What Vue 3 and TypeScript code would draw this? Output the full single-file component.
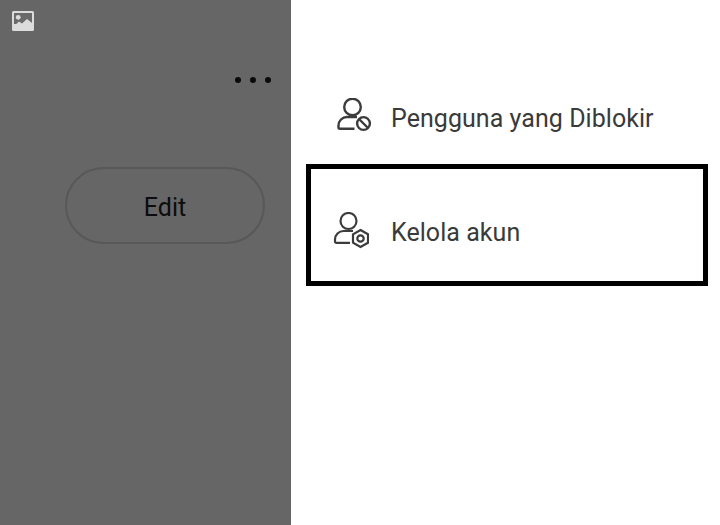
<script setup lang="ts">
const dots: number[] = [1, 2, 3]
</script>

<template>
  <div class="page">
    <aside class="left">
      <svg class="pic" width="22" height="20" viewBox="0 0 22 20">
        <rect x="0" y="0" width="22" height="20" rx="1.5" fill="#dcdcdc" />
        <rect x="2" y="2" width="18" height="11" fill="#6a6a6a" />
        <circle cx="6.2" cy="6.3" r="2.4" fill="#dcdcdc" />
        <path d="M2 15 L7 10.5 L10 12.5 L15 8 L20 12 V16 H2 Z" fill="#dcdcdc" />
      </svg>
      <div class="dots">
        <span v-for="d in dots" :key="d" class="dot"></span>
      </div>
      <button class="edit" type="button">Edit</button>
    </aside>
    <main class="right">
      <div class="row blocked">
        <svg class="ico" width="38" height="40" viewBox="0 0 38 40" fill="none" stroke="#3c3c3c" stroke-width="2.4">
          <circle cx="17.5" cy="9" r="8.3" />
          <path d="M19.5 30.8 H5 a1.5 1.5 0 0 1 -1.5 -1.5 V27.5 a8.5 8.5 0 0 1 8.5 -8.5 H22" />
          <circle cx="28.5" cy="25.5" r="6.4" />
          <path d="M24 21 L33 30" />
        </svg>
        <span class="label">Pengguna yang Diblokir</span>
      </div>
      <div class="row manage">
        <svg class="ico" width="38" height="40" viewBox="0 0 38 40" fill="none" stroke="#3c3c3c" stroke-width="2.2">
          <circle cx="17.5" cy="9" r="8" />
          <path d="M19 30.9 H5.5 a1.5 1.5 0 0 1 -1.5 -1.5 V27.5 a8.5 8.5 0 0 1 8.5 -8.5 H22" />
          <path d="M29.5 18 L37 22.3 V30.7 L29.5 35 L22 30.7 V22.3 Z" />
          <circle cx="29.5" cy="26.5" r="3.2" />
        </svg>
        <span class="label">Kelola akun</span>
      </div>
    </main>
  </div>
</template>

<style scoped>
.page {
  display: flex;
  width: 720px;
  height: 525px;
  overflow: hidden;
  background: #fff;
  font-family: Roboto, "Liberation Sans", sans-serif;
}
.left {
  width: 291px;
  flex: none;
  box-sizing: border-box;
  background: #666666;
  display: flex;
  flex-direction: column;
  padding: 11px 0 0 12px;
}
.pic {
  display: block;
}
.dots {
  display: flex;
  gap: 9px;
  margin: 46px 0 0 223px;
}
.dot {
  width: 6px;
  height: 6px;
  border-radius: 50%;
  background: #0a0a0a;
}
.edit {
  box-sizing: border-box;
  width: 200px;
  height: 77px;
  margin: 84px 0 0 53px;
  border: 2px solid #585858;
  border-radius: 39px;
  background: transparent;
  font: 400 25px Roboto, "Liberation Sans", sans-serif;
  color: #0c0c0c;
  padding: 3px 0 0;
}
.right {
  flex: 1;
  display: flex;
  flex-direction: column;
  padding: 93px 12px 0 15px;
}
.row {
  display: flex;
  align-items: center;
  height: 50px;
}
.blocked {
  padding-left: 29px;
}
.blocked .ico {
  margin-right: 18px;
}
.manage {
  box-sizing: border-box;
  height: 122px;
  margin-top: 21px;
  border: 5px solid #000;
  padding: 14px 0 0 20px;
}
.manage .ico {
  margin-right: 22px;
}
.ico {
  flex: none;
}
.label {
  font-size: 25px;
  letter-spacing: 0.05px;
  color: #3a3a3a;
  white-space: nowrap;
}
</style>
